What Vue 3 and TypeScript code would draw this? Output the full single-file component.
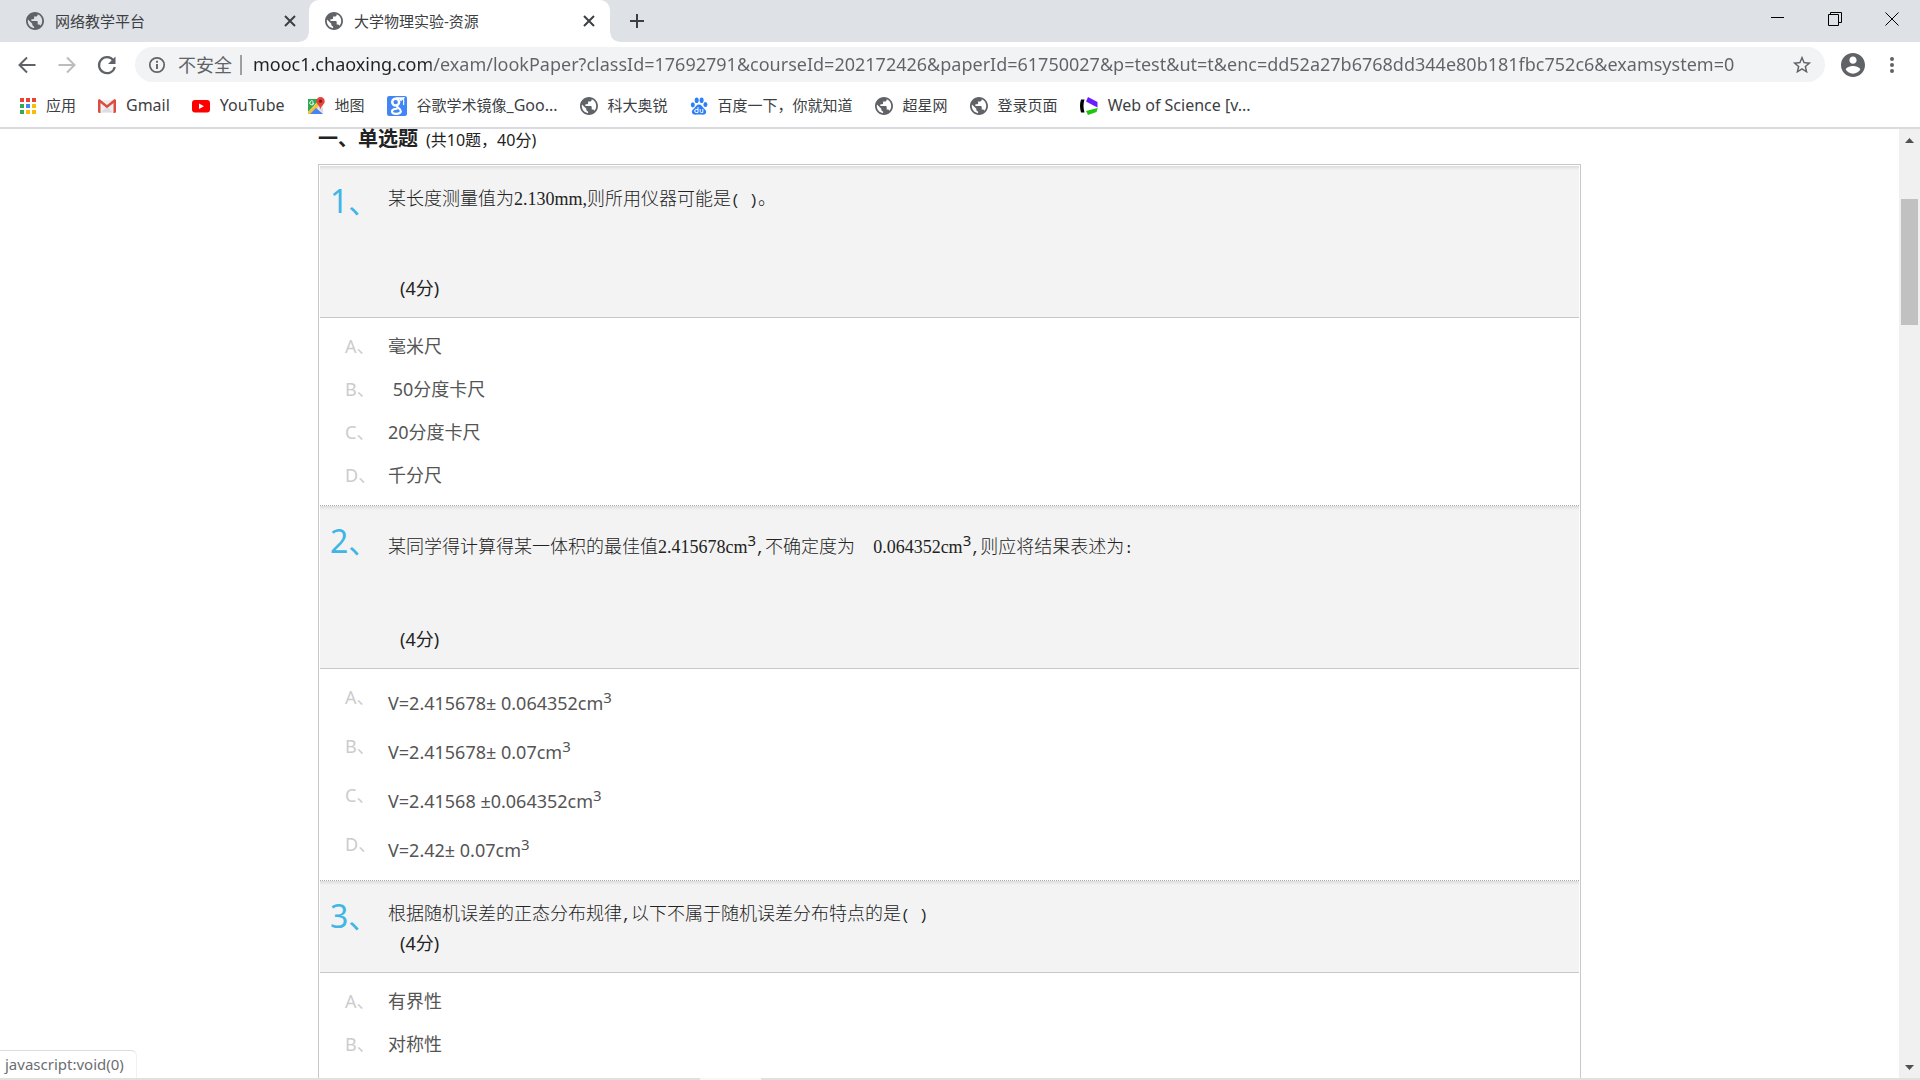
<script setup lang="ts">
import { ref } from 'vue'

interface Segment {
  text: string
  kind?: 'cjk' | 'mono' | 'figure' | 'sup'
}
interface Question {
  no: number
  stem: Segment[]
  spaced: boolean
  raised: boolean
  options: { label: string; parts: Segment[] }[]
}

const GLOBE =
  'M12 2C6.48 2 2 6.48 2 12s4.48 10 10 10 10-4.48 10-10S17.52 2 12 2zm-1 17.93c-3.95-.49-7-3.85-7-7.93 0-.62.08-1.21.21-1.79L9 15v1c0 1.1.9 2 2 2v1.93zm6.9-2.54c-.26-.81-1-1.39-1.9-1.39h-1v-3c0-.55-.45-1-1-1H8v-2h2c.55 0 1-.45 1-1V7h2c1.1 0 2-.9 2-2v-.41c2.93 1.19 5 4.06 5 7.41 0 2.08-.8 3.97-2.1 5.39z'

const tabs = [
  { title: '网络教学平台', active: false },
  { title: '大学物理实验-资源', active: true },
]

const url = ref(
  'mooc1.chaoxing.com/exam/lookPaper?classId=17692791&courseId=202172426&paperId=61750027&p=test&ut=t&enc=dd52a27b6768dd344e80b181fbc752c6&examsystem=0',
)

const bookmarks = [
  { icon: 'apps', cjk: '应用', latin: '' },
  { icon: 'gmail', cjk: '', latin: 'Gmail' },
  { icon: 'youtube', cjk: '', latin: 'YouTube' },
  { icon: 'maps', cjk: '地图', latin: '' },
  { icon: 'google', cjk: '谷歌学术镜像', latin: '_Goo...' },
  { icon: 'globe', cjk: '科大奥锐', latin: '' },
  { icon: 'baidu', cjk: '百度一下，你就知道', latin: '' },
  { icon: 'globe', cjk: '超星网', latin: '' },
  { icon: 'globe', cjk: '登录页面', latin: '' },
  { icon: 'wos', cjk: '', latin: 'Web of Science [v...' },
]

const appColors = ['#ea4335', '#ea4335', '#ea4335', '#34a853', '#4285f4', '#fbbc05', '#34a853', '#fbbc05', '#fbbc05']

const questions: Question[] = [
  {
    no: 1,
    spaced: true,
    raised: false,
    stem: [
      { text: '某长度测量值为' },
      { text: '2.130mm,', kind: 'figure' },
      { text: '则所用仪器可能是' },
      { text: '( )', kind: 'mono' },
      { text: '。' },
    ],
    options: [
      { label: 'A', parts: [{ text: '毫米尺', kind: 'cjk' }] },
      { label: 'B', parts: [{ text: '\u00a050' }, { text: '分度卡尺', kind: 'cjk' }] },
      { label: 'C', parts: [{ text: '20' }, { text: '分度卡尺', kind: 'cjk' }] },
      { label: 'D', parts: [{ text: '千分尺', kind: 'cjk' }] },
    ],
  },
  {
    no: 2,
    spaced: true,
    raised: true,
    stem: [
      { text: '某同学得计算得某一体积的最佳值' },
      { text: '2.415678cm', kind: 'figure' },
      { text: '3', kind: 'sup' },
      { text: ',', kind: 'mono' },
      { text: '不确定度为' },
      { text: '\u00a0\u00a0', kind: 'mono' },
      { text: '0.064352cm', kind: 'figure' },
      { text: '3', kind: 'sup' },
      { text: ',', kind: 'mono' },
      { text: '则应将结果表述为' },
      { text: ':', kind: 'mono' },
    ],
    options: [
      { label: 'A', parts: [{ text: 'V=2.415678± 0.064352cm' }, { text: '3', kind: 'sup' }] },
      { label: 'B', parts: [{ text: 'V=2.415678± 0.07cm' }, { text: '3', kind: 'sup' }] },
      { label: 'C', parts: [{ text: 'V=2.41568 ±0.064352cm' }, { text: '3', kind: 'sup' }] },
      { label: 'D', parts: [{ text: 'V=2.42± 0.07cm' }, { text: '3', kind: 'sup' }] },
    ],
  },
  {
    no: 3,
    spaced: false,
    raised: false,
    stem: [
      { text: '根据随机误差的正态分布规律' },
      { text: ',', kind: 'mono' },
      { text: '以下不属于随机误差分布特点的是' },
      { text: '( )', kind: 'mono' },
    ],
    options: [
      { label: 'A', parts: [{ text: '有界性', kind: 'cjk' }] },
      { label: 'B', parts: [{ text: '对称性', kind: 'cjk' }] },
    ],
  },
]
</script>

<template>
  <div class="window">
    <header class="chrome">
      <div class="tabstrip">
        <div v-for="tab in tabs" :key="tab.title" class="tab" :class="{ active: tab.active }">
          <svg class="ico" viewBox="2 2 20 20"><path :d="GLOBE" fill="#5f6368" /></svg>
          <span class="tab-title">{{ tab.title }}</span>
          <button class="tab-close" aria-label="关闭标签页">
            <svg width="12" height="12" viewBox="0 0 12 12"><path d="M1 1l10 10M11 1L1 11" stroke="#3c4043" stroke-width="2" /></svg>
          </button>
        </div>
        <button class="new-tab" aria-label="新标签页">
          <svg width="16" height="16" viewBox="0 0 16 16"><path d="M8 1v14M1 8h14" stroke="#3c4043" stroke-width="2" /></svg>
        </button>
        <div class="win-controls">
          <button aria-label="最小化"><svg width="14" height="14" viewBox="0 0 14 14"><path d="M0 5.500h13" stroke="#000" /></svg></button>
          <button aria-label="还原">
            <svg width="14" height="14" viewBox="0 0 14 14"><path d="M.5 2.500h10v11H.5zM2.500 2.500v-2h11v10h-3" fill="none" stroke="#000" /></svg>
          </button>
          <button aria-label="关闭"><svg width="14" height="14" viewBox="0 0 14 14"><path d="M.5.5l13 13M13.500.5l-13 13" stroke="#000" /></svg></button>
        </div>
      </div>

      <div class="toolbar">
        <button class="nav" aria-label="后退">
          <svg width="24" height="24" viewBox="0 0 24 24"><path d="M20.500 12H5M12 4.500L4.500 12l7.500 7.500" fill="none" stroke="#5f6368" stroke-width="2" /></svg>
        </button>
        <button class="nav" aria-label="前进" disabled>
          <svg width="24" height="24" viewBox="0 0 24 24"><path d="M3.500 12H19M12 4.500l7.500 7.500-7.500 7.500" fill="none" stroke="#babcbe" stroke-width="2" /></svg>
        </button>
        <button class="nav" aria-label="重新加载">
          <svg width="24" height="24" viewBox="0 0 24 24">
            <path d="M18.500 7.500A8 8 0 1 0 19.800 14" fill="none" stroke="#5f6368" stroke-width="2.200" />
            <path d="M20.500 3.500v7.500H13z" fill="#5f6368" />
          </svg>
        </button>
        <div class="omnibox">
          <svg width="18" height="18" viewBox="0 0 18 18">
            <circle cx="9" cy="9" r="7.200" fill="none" stroke="#5f6368" stroke-width="1.700" />
            <path d="M9 8v5M9 4.800v1.900" stroke="#5f6368" stroke-width="1.900" />
          </svg>
          <span class="insecure">不安全</span>
          <input v-model="url" class="url" type="text" aria-label="地址栏" spellcheck="false" />
          <button class="star" aria-label="收藏">
            <svg width="22" height="22" viewBox="0 0 24 24">
              <path d="M22 9.240l-7.190-.62L12 2 9.190 8.630 2 9.240l5.460 4.730L5.820 21 12 17.270 18.180 21l-1.630-7.030L22 9.240zM12 15.400l-3.760 2.270 1-4.280-3.320-2.880 4.380-.38L12 6.100l1.710 4.040 4.380.38-3.320 2.880 1 4.280L12 15.400z" fill="#5f6368" />
            </svg>
          </button>
        </div>
        <button class="avatar" aria-label="用户">
          <svg width="24" height="24" viewBox="2 2 20 20">
            <path d="M12 2C6.480 2 2 6.480 2 12s4.480 10 10 10 10-4.480 10-10S17.520 2 12 2zm0 3c1.660 0 3 1.340 3 3s-1.340 3-3 3-3-1.340-3-3 1.340-3 3-3zm0 14.200c-2.500 0-4.710-1.280-6-3.220.03-1.990 4-3.080 6-3.080 1.990 0 5.970 1.090 6 3.080-1.290 1.940-3.500 3.220-6 3.220z" fill="#5f6368" />
          </svg>
        </button>
        <button class="menu" aria-label="菜单">
          <svg width="6" height="18" viewBox="0 0 6 18" fill="#5f6368"><circle cx="3" cy="3" r="2" /><circle cx="3" cy="9" r="2" /><circle cx="3" cy="15" r="2" /></svg>
        </button>
      </div>

      <nav class="bookmarks">
        <a v-for="b in bookmarks" :key="b.cjk + b.latin" href="#" class="bookmark">
          <svg v-if="b.icon === 'apps'" class="ico apps" viewBox="0 0 16 16">
            <rect v-for="(c, i) in appColors" :key="i" :x="(i % 3) * 6" :y="Math.floor(i / 3) * 6" width="4" height="4" :fill="c" />
          </svg>
          <svg v-else-if="b.icon === 'gmail'" class="ico" viewBox="0 0 18 18">
            <path d="M1 3h16v12.500H1z" fill="#eceff1" />
            <path d="M3 15.500l6-6 6 6z" fill="#dcdfe1" />
            <path d="M0 3.500Q0 2 1.500 2L9 8l7.500-6Q18 2 18 3.500v11q0 1.500-1.500 1.500H15.500V6L9 11.200 2.500 6v10h-1Q0 16 0 14.500z" fill="#e04b3f" />
          </svg>
          <svg v-else-if="b.icon === 'youtube'" class="ico" viewBox="0 0 18 18">
            <rect y="3" width="18" height="12.500" rx="3" fill="#f00" /><path d="M7 6.500l5 2.800-5 2.700z" fill="#fff" />
          </svg>
          <svg v-else-if="b.icon === 'maps'" class="ico" viewBox="0 0 18 18">
            <path d="M1 2h15v15H1z" fill="#e8eaed" />
            <path d="M1 2h12L1 15z" fill="#2da94f" /><path d="M1 15L12 4l3 3L5 17H1z" fill="#fbc02d" />
            <path d="M3 17l6-6 7 6z" fill="#4285f4" /><path d="M10 10l2-2 4 4v4z" fill="#dadce0" />
            <path d="M13.500 0a4.200 4.200 0 0 1 4.200 4.200c0 3-3.200 4-4.200 8-1-4-4.200-5-4.200-8A4.200 4.200 0 0 1 13.500 0z" fill="#e5443a" />
            <circle cx="13.500" cy="4.200" r="1.600" fill="#7d1c18" />
            <path d="M6.300 4.500A2 2 0 1 0 6.800 6H5" fill="none" stroke="#fff" />
          </svg>
          <svg v-else-if="b.icon === 'google'" class="ico big" viewBox="0 0 18 18">
            <rect width="18" height="18" rx="2" fill="#4285f4" />
            <circle cx="7.800" cy="5.500" r="3.100" fill="none" stroke="#fff" stroke-width="2.200" />
            <path d="M8 2h6l-2 2M9.500 8.500c-2.500 1.500 3.500 2.500 3 5.500-.5 2.600-7.500 2.800-8 .2-.3-2.200 3-3 5-2.700" fill="none" stroke="#fff" stroke-width="1.900" />
            <path d="M15 1v7" stroke="#fff" />
          </svg>
          <svg v-else-if="b.icon === 'baidu'" class="ico" viewBox="0 0 18 18" fill="#2d7ff9">
            <ellipse cx="2.800" cy="7.800" rx="2" ry="2.600" /><ellipse cx="6.700" cy="3.300" rx="2" ry="2.800" />
            <ellipse cx="11.600" cy="3.300" rx="2" ry="2.800" /><ellipse cx="15.400" cy="7.500" rx="2" ry="2.600" />
            <path d="M9 7.500c2.500 0 3 2 4.500 3.500s3.200 2.500 2.500 4.800c-.8 2.800-4 1.700-7 1.700s-6 1.100-7-1.700c-.7-2.300 1-3.300 2.500-4.800S6.500 7.500 9 7.500z" />
            <path d="M8 10v5.500H6.200a1.500 1.500 0 0 1 0-3H8M10.200 12v2.400q0 1.100 1.100 1.100h1.500V12" fill="none" stroke="#fff" />
          </svg>
          <svg v-else-if="b.icon === 'wos'" class="ico" viewBox="0 0 18 18">
            <path d="M1 2.500h3.500Q2.500 9 4.500 15.500H1Q-1 9 1 2.500z" fill="#000" />
            <path d="M8 0l9.500 5v5.500l-4-2L6 4.500z" fill="#6a1bff" /><path d="M17.800 11L16.500 15l-8.500 3-2-4 7.500-2z" fill="#20c60e" />
          </svg>
          <svg v-else class="ico" viewBox="2 2 20 20"><path :d="GLOBE" fill="#5f6368" /></svg>
          <span class="bookmark-label">{{ b.cjk }}<span v-if="b.latin" class="roman">{{ b.latin }}</span></span>
        </a>
      </nav>
    </header>

    <div class="viewport">
      <main class="page">
        <div class="paper">
          <h2 class="heading">一、单选题<small>(共10题，40分)</small></h2>
          <div class="sheet">
            <section v-for="q in questions" :key="q.no" class="question">
              <div class="stem">
                <div class="number">{{ q.no }}<span class="mark">、</span></div>
                <div class="stem-body" :class="{ spaced: q.spaced, raised: q.raised }">
                  <p class="stem-text"><span v-for="(s, i) in q.stem" :key="i" :class="s.kind">{{ s.text }}</span></p>
                  <p class="score">(4<span class="cjk">分</span>)</p>
                </div>
              </div>
              <ul class="options" :class="{ raised: q.raised }">
                <li v-for="o in q.options" :key="o.label">
                  <span class="label">{{ o.label }}、</span>
                  <a href="javascript:void(0)" class="answer"><span v-for="(s, i) in o.parts" :key="i" :class="s.kind">{{ s.text }}</span></a>
                </li>
              </ul>
            </section>
          </div>
        </div>
      </main>
      <div class="scrollbar" aria-hidden="true">
        <svg width="9" height="5" viewBox="0 0 9 5"><path d="M0 5L4.500 0 9 5z" fill="#505050" /></svg>
        <div class="track"><div class="thumb"></div></div>
        <svg width="9" height="5" viewBox="0 0 9 5"><path d="M0 0h9L4.500 5z" fill="#505050" /></svg>
      </div>
      <div class="status">javascript:void(0)</div>
    </div>
    <div class="edge"><div class="edge-light"></div></div>
  </div>
</template>

<style>
body {
  margin: 0;
  background: #fff;
}
</style>

<style scoped>
.window {
  display: flex;
  flex-direction: column;
  height: 100vh;
  overflow: hidden;
  background: #fff;
  font-family: 'Noto Sans', 'Noto Sans CJK SC', sans-serif;
  color: #222;
}
button {
  display: flex;
  align-items: center;
  justify-content: center;
  padding: 0;
  border: 0;
  background: none;
}
a {
  color: inherit;
  text-decoration: none;
}
svg {
  display: block;
  flex: none;
}
.ico {
  width: 18px;
  height: 18px;
}
.chrome {
  flex: none;
  border-bottom: 2px solid #dadbe1;
}
.tabstrip {
  display: flex;
  height: 42px;
  background: #dee1e6;
}
.tab {
  position: relative;
  display: flex;
  align-items: center;
  box-sizing: border-box;
  width: 301px;
  padding: 0 14px 0 16px;
  border-radius: 10px 10px 0 0;
  font-size: 15px;
  color: #3c4043;
}
.tab:first-child {
  width: 309px;
  padding: 0 12px 0 26px;
}
.tab.active {
  background: #fff;
}
.tab.active::before,
.tab.active::after {
  content: '';
  position: absolute;
  bottom: 0;
  width: 9px;
  height: 9px;
}
.tab.active::before {
  right: 100%;
  background: radial-gradient(circle at 0 0, transparent 8px, #fff 9px);
}
.tab.active::after {
  left: 100%;
  background: radial-gradient(circle at 100% 0, transparent 8px, #fff 9px);
}
.tab-title {
  flex: 1;
  margin-left: 11px;
  padding-bottom: 2px;
  white-space: nowrap;
}
.tab-close {
  width: 14px;
  height: 14px;
}
.new-tab {
  width: 54px;
}
.win-controls {
  display: flex;
  align-items: flex-start;
  margin-left: auto;
}
.win-controls button {
  width: 57px;
  height: 37px;
}
.toolbar {
  display: flex;
  align-items: center;
  height: 45px;
  padding: 0 25px 0 7px;
}
.nav {
  width: 40px;
  height: 36px;
}
.omnibox {
  display: flex;
  flex: 1;
  align-items: center;
  height: 35px;
  margin-left: 8px;
  padding: 0 12px 0 13px;
  border-radius: 18px;
  background: #f1f3f4;
}
.insecure {
  margin-left: 12px;
  padding-right: 8px;
  border-right: 2px solid #9aa0a6;
  font-size: 18px;
  line-height: 20px;
  color: #5f6368;
}
.url {
  flex: 1;
  min-width: 0;
  height: 30px;
  margin-left: 11px;
  padding: 0 0 2px;
  border: 0;
  outline: 0;
  background: linear-gradient(90deg, #202124 178px, #5f6368 178px) text;
  font: 18px 'Noto Sans', sans-serif;
  color: transparent;
}
.star {
  width: 22px;
}
.avatar {
  width: 24px;
  margin-left: 16px;
}
.menu {
  width: 6px;
  margin-left: 24px;
}
.bookmarks {
  display: flex;
  align-items: center;
  gap: 22px;
  height: 38px;
  padding: 0 0 2px 20px;
}
.bookmark {
  display: flex;
  align-items: center;
  gap: 10px;
  color: #3c4043;
}
.bookmark-label {
  height: 22px;
  font-size: 15px;
  line-height: 20px;
  white-space: nowrap;
}
.roman {
  font-size: 16px;
}
.ico.apps {
  width: 16px;
  height: 16px;
}
.ico.big {
  width: 20px;
  height: 20px;
}
.viewport {
  position: relative;
  display: flex;
  flex: 1;
  min-height: 0;
}
.page {
  flex: 1;
}
.paper {
  max-width: 1263px;
  margin: 0 auto;
}
.heading {
  margin: 0;
  height: 35px;
  font-size: 20px;
  line-height: 20px;
}
.heading small {
  margin-left: 8px;
  font-size: 16px;
  font-weight: 400;
}
.sheet {
  padding: 1px 1px 16px;
  border: 1px solid #c8c8c8;
}
.question + .question {
  border-top: 1px dotted #aaa;
}
.stem {
  display: flex;
  border-bottom: 1px solid #c8c8c8;
  background: linear-gradient(#dcdcdc, #f3f3f3 4px);
}
.number {
  width: 68px;
  box-sizing: border-box;
  padding: 15px 0 0 10px;
  font-size: 32px;
  line-height: 40px;
  color: #3fb6e6;
  white-space: nowrap;
}
.mark {
  font-size: 30px;
}
.stem-body {
  flex: 1;
  padding: 16px 0 13px;
}
.stem-text,
.score {
  margin: 0;
  height: 31px;
  font-size: 18px;
  line-height: 31px;
}
.stem-text {
  font-family: 'Noto Sans CJK SC', sans-serif;
  font-weight: 300;
}
.mono {
  font-family: 'Liberation Mono', monospace;
  font-size: 15px;
  line-height: 1;
}
.figure {
  font-family: 'Liberation Serif', serif;
  line-height: 1;
}
.score {
  padding-left: 12px;
}
.spaced .stem-text {
  margin-bottom: 60px;
}
.raised .stem-text {
  padding: 8px 0 3px;
}
.sup {
  font-family: 'Noto Sans', sans-serif;
  font-size: 15px;
  font-weight: 400;
  line-height: 0;
  vertical-align: super;
}
.options {
  margin: 0;
  padding: 7px 0 8px 25px;
  list-style: none;
}
.options li {
  display: flex;
  height: 43px;
  font-size: 18px;
  line-height: 43px;
  color: #555;
}
.options.raised li {
  height: 49px;
}
.options.raised .answer {
  padding-top: 6px;
}
.label {
  width: 43px;
  color: #ccc;
}
.cjk {
  font-size: 18px;
  line-height: 1;
}
.scrollbar {
  display: flex;
  flex-direction: column;
  align-items: center;
  width: 21px;
  padding: 9px 0 8px;
  box-sizing: border-box;
  background: #f0f0f0;
}
.track {
  flex: 1;
  width: 17px;
  padding-top: 56px;
}
.thumb {
  height: 126px;
  background: #c1c1c1;
}
.status {
  position: absolute;
  bottom: 0;
  left: 0;
  box-sizing: border-box;
  width: 137px;
  padding: 0 5px;
  border-top: 1px solid #dadce0;
  border-right: 1px solid #f1f1f1;
  border-radius: 0 6px 0 0;
  background: #fff;
  font-size: 15px;
  line-height: 27px;
  color: #6b6e72;
  white-space: nowrap;
}
.edge {
  position: relative;
  flex: none;
  height: 2px;
  padding-left: 700px;
  background: #e0e0e0;
}
.edge-light {
  width: 61px;
  height: 2px;
  background: #f7f7f7;
}
</style>
